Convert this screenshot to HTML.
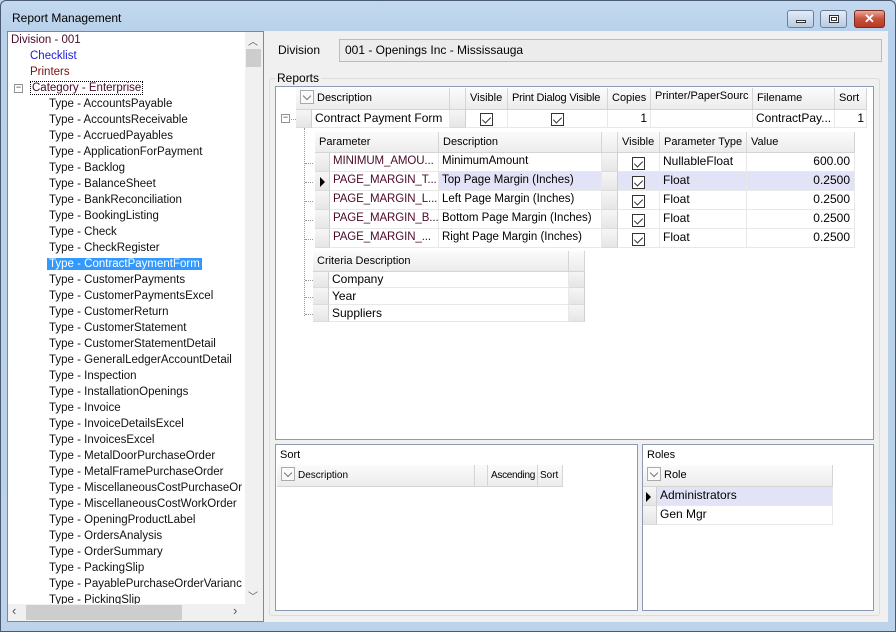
<!DOCTYPE html>
<html><head><style>
*{box-sizing:border-box;margin:0;padding:0}
body{width:896px;height:632px;position:relative;overflow:hidden;font-family:"Liberation Sans",sans-serif;font-size:11px;color:#000;background:#bdd4ec}
.a{position:absolute}
.frame{left:0;top:0;width:896px;height:632px;border:1px solid #4a5a70;border-radius:6px 6px 0 0;background:linear-gradient(#c3d9f0,#b9d1ea 30px,#bcd3eb)}
.hd{position:absolute;background:linear-gradient(#fbfbfb,#ececec);border-right:1px solid #d5d5d5;border-bottom:1px solid #d5d5d5;padding:0 0 0 4px;white-space:nowrap;overflow:hidden;line-height:21px}
.rh{position:absolute;background:linear-gradient(#f6f6f6,#e6e6e6);border-right:1px solid #cfcfcf;border-bottom:1px solid #dcdcdc}
.c{position:absolute;white-space:nowrap;overflow:hidden;border-right:1px solid #e8e8e8;border-bottom:1px solid #e8e8e8;padding-left:3px}
.cb{position:absolute;width:13px;height:13px;border:1px solid #333;background:#fff}
.cb:after{content:"";position:absolute;left:3px;top:1px;width:4px;height:7px;border-right:1px solid #333;border-bottom:1px solid #333;transform:rotate(45deg)}
.tree div{height:16px;line-height:16px;font-size:11.5px;white-space:nowrap}
.dd{display:inline-block;width:14px;height:14px;border:1px solid #aaa;background:#fafafa;vertical-align:middle;margin-right:3px;position:relative;top:-1px}
.dd:after{content:"";position:absolute;left:3px;top:2px;width:5px;height:5px;border-right:1px solid #777;border-bottom:1px solid #777;transform:rotate(45deg)}
.vdot{position:absolute;border-left:1px dotted #999}
.hdot{position:absolute;border-top:1px dotted #999;width:8px}
</style></head><body>
<div class="a frame"></div>
<div class="a" style="left:12px;top:11px;font-size:12px;color:#000">Report Management</div>
<div class="a" style="left:787px;top:10px;width:27px;height:18px;border:1px solid #6d7f98;border-radius:3px;background:linear-gradient(#e2ecf7,#b8cbe3)"><div class="a" style="left:8px;top:9px;width:10px;height:3px;background:#fff;border:1px solid #333"></div></div>
<div class="a" style="left:820px;top:10px;width:27px;height:18px;border:1px solid #6d7f98;border-radius:3px;background:linear-gradient(#e2ecf7,#b8cbe3)"><div class="a" style="left:8px;top:4px;width:10px;height:8px;border:1px solid #333;background:#fff"><div class="a" style="left:1px;top:1px;width:6px;height:4px;border:1px solid #333"></div></div></div>
<div class="a" style="left:854px;top:10px;width:31px;height:18px;border:1px solid #7a2a20;border-radius:3px;background:linear-gradient(#e9a79a,#c8503c 50%,#b63a26);color:#fff;font-weight:bold;text-align:center;line-height:16px;font-size:13px">✕</div>
<div class="a" style="left:7px;top:31px;width:881px;height:591px;background:#f0f0f0"></div>
<div class="a" style="left:7px;top:31px;width:257px;height:591px;background:#fff;border:1px solid #828790"></div>
<div class="a tree" style="left:11px;top:32px">
<div style="color:#4b0a2a">Division - 001</div>
<div style="color:#1c1cd8;padding-left:19px">Checklist</div>
<div style="color:#7a1010;padding-left:19px">Printers</div>
<div style="color:#4b0a2a;padding-left:19px;position:relative"><span class="a" style="left:3px;top:4px;width:9px;height:9px;border:1px solid #919191;background:#fff;line-height:5px;font-size:9px;text-align:center;color:#333">−</span><span style="border:1px dotted #000;padding:0 1px">Category - Enterprise</span></div>
</div>
<div class="a tree" style="left:49px;top:96px;color:#111">
<div>Type - AccountsPayable</div><div>Type - AccountsReceivable</div><div>Type - AccruedPayables</div><div>Type - ApplicationForPayment</div><div>Type - Backlog</div><div>Type - BalanceSheet</div><div>Type - BankReconciliation</div><div>Type - BookingListing</div><div>Type - Check</div><div>Type - CheckRegister</div>
<div><span style="background:#3399ff;color:#fff;padding:0 2px;margin-left:-2px">Type - ContractPaymentForm</span></div>
<div>Type - CustomerPayments</div><div>Type - CustomerPaymentsExcel</div><div>Type - CustomerReturn</div><div>Type - CustomerStatement</div><div>Type - CustomerStatementDetail</div><div>Type - GeneralLedgerAccountDetail</div><div>Type - Inspection</div><div>Type - InstallationOpenings</div><div>Type - Invoice</div><div>Type - InvoiceDetailsExcel</div><div>Type - InvoicesExcel</div><div>Type - MetalDoorPurchaseOrder</div><div>Type - MetalFramePurchaseOrder</div><div>Type - MiscellaneousCostPurchaseOr</div><div>Type - MiscellaneousCostWorkOrder</div><div>Type - OpeningProductLabel</div><div>Type - OrdersAnalysis</div><div>Type - OrderSummary</div><div>Type - PackingSlip</div><div>Type - PayablePurchaseOrderVarianc</div><div>Type - PickingSlip</div>
</div>
<div class="a" style="left:245px;top:32px;width:18px;height:572px;background:#f0f0f0"></div>
<div class="a" style="left:246px;top:49px;width:15px;height:18px;background:#cdcdcd"></div>
<div class="a" style="left:248px;top:33px;font-size:10px;color:#555">︿</div>
<div class="a" style="left:248px;top:588px;font-size:10px;color:#555">﹀</div>
<div class="a" style="left:8px;top:604px;width:255px;height:17px;background:#f0f0f0"></div>
<div class="a" style="left:26px;top:605px;width:156px;height:15px;background:#cdcdcd"></div>
<div class="a" style="left:12px;top:603px;font-size:13px;color:#555">‹</div>
<div class="a" style="left:233px;top:603px;font-size:13px;color:#555">›</div>
<div class="a" style="left:278px;top:43px;font-size:12px">Division</div>
<div class="a" style="left:339px;top:39px;width:543px;height:23px;border:1px solid #bcbcbc;background:#ececec;font-size:12px;line-height:21px;padding-left:5px">001 - Openings Inc - Mississauga</div>
<div class="a" style="left:269px;top:78px;width:611px;height:538px;border:1px solid #dcdcdc;border-radius:3px"></div>
<div class="a" style="left:275px;top:71px;background:#f0f0f0;padding:0 2px;font-size:12px">Reports</div>
<div class="a" style="left:275px;top:86px;width:599px;height:354px;background:#fff;border:1px solid #8a9ab3"></div>
<div class="hd" style="left:296px;top:88px;width:154px;height:22px"><span class="dd"></span>Description</div>
<div class="hd" style="left:450px;top:88px;width:16px;height:22px"></div>
<div class="hd" style="left:466px;top:88px;width:42px;height:22px">Visible</div>
<div class="hd" style="left:508px;top:88px;width:100px;height:22px;letter-spacing:-.2px">Print Dialog Visible</div>
<div class="hd" style="left:608px;top:88px;width:43px;height:22px">Copies</div>
<div class="hd" style="left:651px;top:88px;width:102px;height:22px;line-height:16px">Printer/PaperSourc</div>
<div class="hd" style="left:753px;top:88px;width:82px;height:22px">Filename</div>
<div class="hd" style="left:835px;top:88px;width:32px;height:22px">Sort</div>
<div class="a" style="left:281px;top:114px;width:9px;height:9px;border:1px solid #919191;background:#fff;font-size:9px;line-height:5px;text-align:center;color:#333">−</div>
<div class="hdot" style="left:291px;top:119px;width:5px"></div>
<div class="rh" style="left:296px;top:110px;width:16px;height:18px"></div>
<div class="c" style="left:312px;top:110px;width:138px;height:18px;font-size:12px;line-height:16px">Contract Payment Form</div>
<div class="rh" style="left:450px;top:110px;width:16px;height:18px"></div>
<div class="c" style="left:466px;top:110px;width:42px;height:18px"></div><div class="cb" style="left:480px;top:113px"></div>
<div class="c" style="left:508px;top:110px;width:100px;height:18px"></div><div class="cb" style="left:551px;top:113px"></div>
<div class="c" style="left:608px;top:110px;width:43px;height:18px;text-align:right;padding-right:3px;font-size:12px;line-height:16px">1</div>
<div class="c" style="left:651px;top:110px;width:102px;height:18px"></div>
<div class="c" style="left:753px;top:110px;width:82px;height:18px;font-size:12px;line-height:16px">ContractPay...</div>
<div class="c" style="left:835px;top:110px;width:32px;height:18px;text-align:right;padding-right:2px;font-size:12px;line-height:16px">1</div>
<div class="vdot" style="left:304px;top:128px;height:188px"></div>
<div class="hd" style="left:315px;top:132px;width:124px;height:21px">Parameter</div>
<div class="hd" style="left:439px;top:132px;width:163px;height:21px">Description</div>
<div class="hd" style="left:602px;top:132px;width:16px;height:21px"></div>
<div class="hd" style="left:618px;top:132px;width:42px;height:21px">Visible</div>
<div class="hd" style="left:660px;top:132px;width:87px;height:21px">Parameter Type</div>
<div class="hd" style="left:747px;top:132px;width:108px;height:21px">Value</div>
<div id="prm"></div>
<div class="hd" style="left:313px;top:251px;width:256px;height:21px">Criteria Description</div>
<div class="hd" style="left:569px;top:251px;width:16px;height:21px"></div>
<div class="a" style="left:275px;top:444px;width:363px;height:167px;background:#fff;border:1px solid #8a9ab3"></div>
<div class="a" style="left:280px;top:449px;font-size:11px">Sort</div>
<div class="hd" style="left:277px;top:465px;width:198px;height:22px;font-size:10px"><span class="dd"></span>Description</div>
<div class="hd" style="left:475px;top:465px;width:13px;height:22px"></div>
<div class="hd" style="left:488px;top:465px;width:50px;height:22px;font-size:10px;padding-left:3px;letter-spacing:-.3px">Ascending</div>
<div class="hd" style="left:538px;top:465px;width:25px;height:22px;padding-left:2px;font-size:10px">Sort</div>
<div class="a" style="left:642px;top:444px;width:232px;height:167px;background:#fff;border:1px solid #8a9ab3"></div>
<div class="a" style="left:647px;top:449px">Roles</div>
<div class="hd" style="left:643px;top:465px;width:190px;height:22px"><span class="dd"></span>Role</div>
<div class="rh" style="left:643px;top:487px;width:14px;height:19px"></div>
<div class="a" style="left:646px;top:492px;border-left:5px solid #000;border-top:5px solid transparent;border-bottom:5px solid transparent"></div>
<div class="c" style="left:657px;top:487px;width:176px;height:19px;background:#e3e3f7;line-height:16px;font-size:12px">Administrators</div>
<div class="rh" style="left:643px;top:506px;width:14px;height:19px"></div>
<div class="c" style="left:657px;top:506px;width:176px;height:19px;line-height:16px;font-size:12px">Gen Mgr</div>
<script>
var rows=[["MINIMUM_AMOU...","MinimumAmount","NullableFloat","600.00"],["PAGE_MARGIN_T...","Top Page Margin (Inches)","Float","0.2500"],["PAGE_MARGIN_L...","Left Page Margin (Inches)","Float","0.2500"],["PAGE_MARGIN_B...","Bottom Page Margin (Inches)","Float","0.2500"],["PAGE_MARGIN_...","Right Page Margin (Inches)","Float","0.2500"]];
var h="";rows.forEach(function(r,i){var y=153+i*19;var bg=i==1?"background:#e3e3f7;":"";
h+='<div class="hdot" style="left:305px;top:'+(y+10)+'px"></div>';
h+='<div class="rh" style="left:315px;top:'+y+'px;width:15px;height:19px"></div>';
if(i==1)h+='<div class="a" style="left:320px;top:'+(y+5)+'px;border-left:5px solid #000;border-top:5px solid transparent;border-bottom:5px solid transparent"></div>';
h+='<div class="c" style="left:330px;top:'+y+'px;width:109px;height:19px;color:#4b0a2a;font-size:11.5px;line-height:16px;letter-spacing:-.1px">'+r[0]+'</div>';
h+='<div class="c" style="left:439px;top:'+y+'px;width:163px;height:19px;font-size:11.5px;line-height:16px;'+bg+'">'+r[1]+'</div>';
h+='<div class="rh" style="left:602px;top:'+y+'px;width:16px;height:19px"></div>';
h+='<div class="c" style="left:618px;top:'+y+'px;width:42px;height:19px;'+bg+'"></div><div class="cb" style="left:632px;top:'+(y+4)+'px"></div>';
h+='<div class="c" style="left:660px;top:'+y+'px;width:87px;height:19px;font-size:12px;line-height:16px;'+bg+'">'+r[2]+'</div>';
h+='<div class="c" style="left:747px;top:'+y+'px;width:108px;height:19px;text-align:right;padding-right:4px;font-size:12px;line-height:16px;'+bg+'">'+r[3]+'</div>';});
["Company","Year","Suppliers"].forEach(function(t,i){var y=271+i*17;
h+='<div class="hdot" style="left:305px;top:'+(y+9)+'px"></div>';
h+='<div class="rh" style="left:313px;top:'+y+'px;width:16px;height:17px"></div>';
h+='<div class="c" style="left:329px;top:'+y+'px;width:240px;height:17px;font-size:12px;line-height:17px">'+t+'</div>';
h+='<div class="rh" style="left:569px;top:'+y+'px;width:16px;height:17px"></div>';});
document.getElementById("prm").innerHTML=h;
</script>
</body></html>
